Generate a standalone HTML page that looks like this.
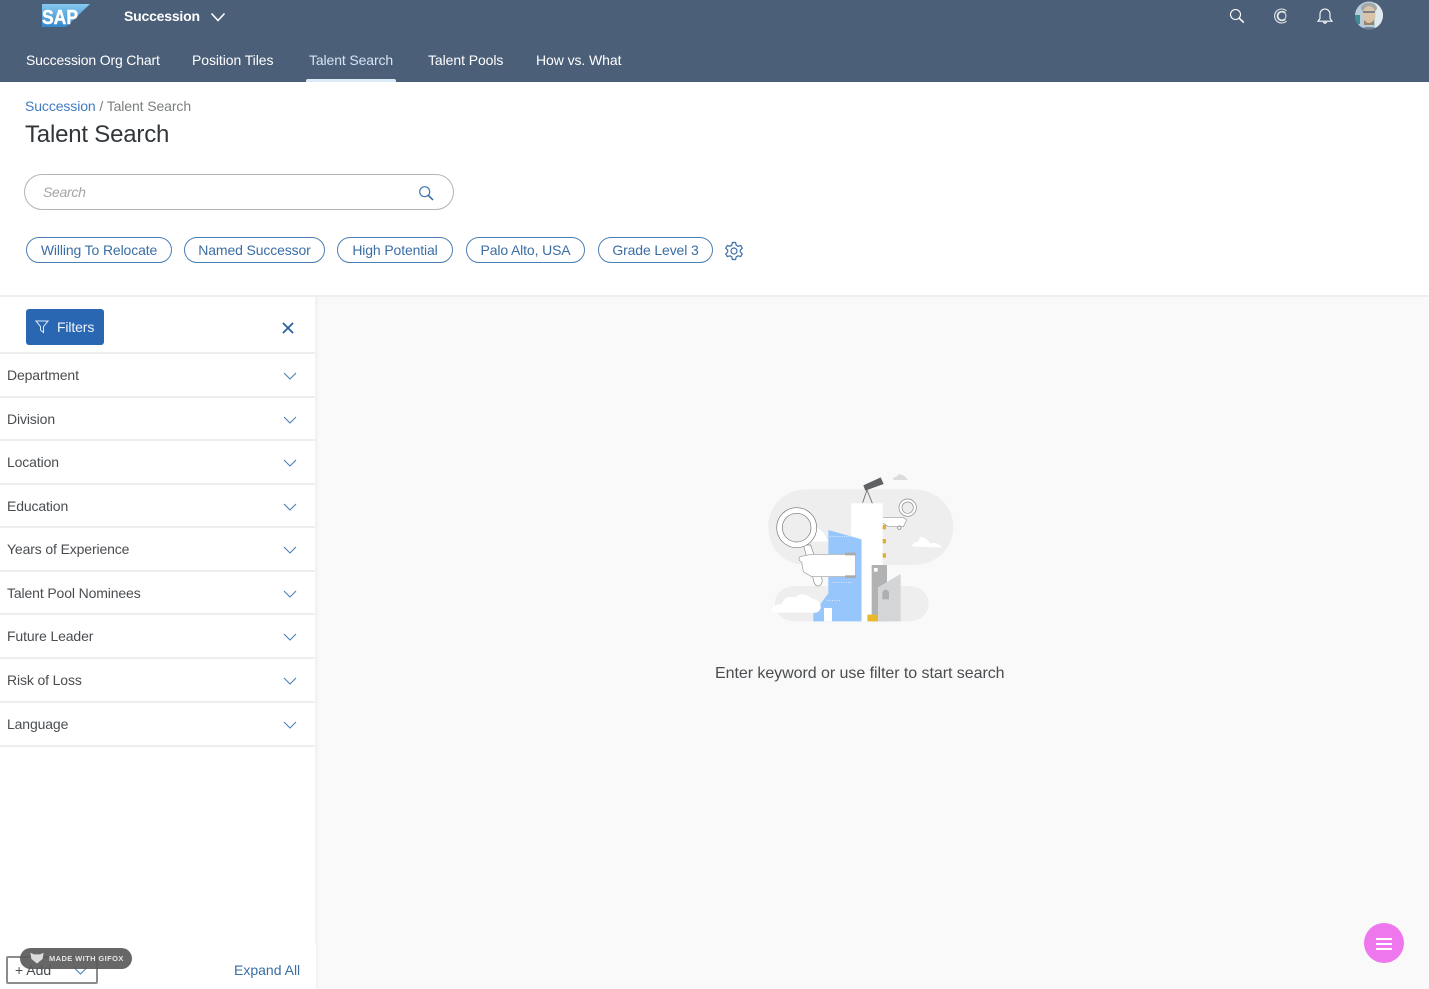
<!DOCTYPE html>
<html><head><meta charset="utf-8"><title>Talent Search</title>
<style>
*{box-sizing:border-box}
html,body{margin:0;padding:0;width:1429px;height:989px;overflow:hidden;background:#fff;font-family:"Liberation Sans",sans-serif;color:#32363a}
.a{position:absolute;white-space:nowrap}
#hdr{position:absolute;left:0;top:0;width:1429px;height:82px;background:#4b5f78}
.nav{position:absolute;top:52px;font-size:14px;line-height:16px;color:#fff;letter-spacing:-.08px}
.chip{position:absolute;top:237px;height:26px;border:1px solid #4a7fb5;border-radius:13px;font-size:14px;line-height:24px;color:#3a6ea5;text-align:center;letter-spacing:-.13px}
.row{position:absolute;left:0;width:315px;height:44px;border-bottom:2px solid #eeeeee;font-size:14px;color:#4a4d50;letter-spacing:-.13px}
.row span{position:absolute;left:7px;top:13px;line-height:16px}
.row svg{position:absolute;left:283px;top:17px}
</style></head><body>
<div id="hdr"></div>

<svg class="a" style="left:42px;top:4px" width="49" height="24" viewBox="0 0 49 24"><defs><linearGradient id="g" x1="0" y1="0" x2="0" y2="1"><stop offset="0" stop-color="#86c8f0"/><stop offset="1" stop-color="#3588cb"/></linearGradient></defs><polygon points="0,0 48,0 24,23 0,23" fill="url(#g)"/><text x="0" y="20" font-family="Liberation Sans" font-weight="700" font-size="20" fill="#fff" stroke="#fff" stroke-width=".5" textLength="36" lengthAdjust="spacingAndGlyphs">SAP</text></svg>
<div class="a" style="left:124px;top:8px;font-size:14px;line-height:16px;font-weight:700;color:#fff;letter-spacing:-.2px">Succession</div>
<svg class="a" style="left:210px;top:11px" width="16" height="12" viewBox="0 0 16 12"><path d="M1.5 2.5 8 9.5 14.5 2.5" fill="none" stroke="#fff" stroke-width="1.6"/></svg>

<div class="nav" style="left:26px;letter-spacing:-.16px">Succession Org Chart</div>
<div class="nav" style="left:192px">Position Tiles</div>
<div class="nav" style="left:309px;color:#d5e4f2;letter-spacing:-.12px">Talent Search</div>
<div class="nav" style="left:428px">Talent Pools</div>
<div class="nav" style="left:536px">How vs. What</div>
<div class="a" style="left:306px;top:79px;width:90px;height:3px;background:#dcebf8;border-radius:2px 2px 0 0"></div>

<svg class="a" style="left:1229px;top:8px" width="16" height="16" viewBox="0 0 16 16"><circle cx="6.5" cy="6.5" r="5" fill="none" stroke="#fff" stroke-width="1.1"/><path d="M10.2 10.2 14.8 14.6" stroke="#fff" stroke-width="1.6"/></svg>
<svg class="a" style="left:1273px;top:8px" width="16" height="16" viewBox="0 0 16 16" fill="none" stroke="#e2e6ea"><path d="M13.5 3A7 7 0 1 0 13.5 13" stroke-width="1.1"/><path d="M12.5 5A4.7 4.7 0 1 0 12.5 11" stroke-width="1.1"/><circle cx="9" cy="8" r="4" stroke-width="1"/></svg>
<svg class="a" style="left:1317px;top:8px" width="16" height="16" viewBox="0 0 16 16" fill="none" stroke="#fff" stroke-width="1.1"><path d="M1 13.2H15L13 10.5V6A5 5 0 0 0 3 6V10.5Z"/><path d="M6.5 14A1.6 1.6 0 0 0 9.500 14" stroke-width="1.3"/></svg>
<svg class="a" style="left:1355px;top:1px" width="28" height="29" viewBox="0 0 28 29"><defs><clipPath id="c"><circle cx="14" cy="14.500" r="14"/></clipPath></defs><g clip-path="url(#c)"><rect width="28" height="29" fill="#b7cbd8"/><rect x="20" width="8" height="29" fill="#dfe9ee"/><rect x="0" y="14" width="5" height="9" fill="#3f8b96"/><ellipse cx="14" cy="7" rx="8" ry="5" fill="#a5a8a8"/><ellipse cx="14" cy="14" rx="6.500" ry="9" fill="#d9c3a9"/><rect x="8" y="10" width="12" height="2" fill="#7c8382"/><path d="M9 19Q14 25 19 19V24H9Z" fill="#9a8468"/><path d="M2 29Q14 23 26 29Z" fill="#6b7e92"/></g></svg>

<div class="a" style="left:25px;top:98px;font-size:14px;line-height:16px;color:#7b7e80;letter-spacing:-.1px"><span style="color:#427cc0">Succession</span> / Talent Search</div>
<div class="a" style="left:25px;top:121px;font-size:24px;line-height:28px;color:#32363a;letter-spacing:-.2px">Talent Search</div>

<div class="a" style="left:24px;top:174px;width:430px;height:36px;border:1px solid #b4b4b4;border-radius:18px"></div>
<div class="a" style="left:43px;top:184px;font-size:14px;line-height:16px;font-style:italic;color:#a3a5a7;letter-spacing:-.3px">Search</div>
<svg class="a" style="left:418px;top:185px" width="16" height="16" viewBox="0 0 16 16"><circle cx="6.700" cy="6.700" r="5" fill="none" stroke="#3f78b5" stroke-width="1.200"/><path d="M10.300 10.300 15 15" stroke="#2f669f" stroke-width="1.500"/></svg>

<div class="chip" style="left:26px;width:146px">Willing To Relocate</div>
<div class="chip" style="left:184px;width:141px">Named Successor</div>
<div class="chip" style="left:337px;width:116px">High Potential</div>
<div class="chip" style="left:466px;width:119px">Palo Alto, USA</div>
<div class="chip" style="left:598px;width:115px">Grade Level 3</div>
<svg class="a" style="left:724px;top:241px" width="20" height="20" viewBox="0 0 20 20" fill="none" stroke="#3a6ea5" stroke-width="1.200"><path d="M8.400 1.500H11.600L12.200 4.200 14.100 5.300 16.700 4.500 18.300 7.200 16.300 9.100V11L18.300 12.900 16.700 15.600 14.100 14.800 12.200 15.900 11.600 18.500H8.400L7.800 15.900 5.900 14.800 3.300 15.600 1.700 12.900 3.700 11V9.100L1.700 7.200 3.300 4.500 5.900 5.300 7.800 4.200Z" stroke-linejoin="round"/><circle cx="10" cy="10" r="3"/></svg>

<div class="a" style="left:0;top:295px;width:1429px;height:2px;background:#efefef"></div>
<div class="a" style="left:316px;top:297px;width:1113px;height:692px;background:#f9f9f9"></div>
<div class="a" style="left:315px;top:297px;width:3px;height:692px;background:#f3f3f3"></div>

<div class="a" style="left:26px;top:309px;width:78px;height:36px;background:#2a67b2;border-radius:3px"></div>
<svg class="a" style="left:35px;top:320px" width="14" height="14" viewBox="0 0 14 14"><path d="M1 1H13L8.500 6.500V12.500L5.500 10V6.500Z" fill="none" stroke="#dce8f5" stroke-width="1"/></svg>
<div class="a" style="left:57px;top:319px;font-size:14px;line-height:16px;color:#eef4fa;letter-spacing:-.13px">Filters</div>
<svg class="a" style="left:282px;top:322px" width="12" height="12" viewBox="0 0 12 12"><path d="M1 1 11 11M11 1 1 11" stroke="#2a5f9e" stroke-width="1.800"/></svg>

<div class="a" style="left:0;top:352px;width:315px;height:2px;background:#eeeeee"></div>
<div class="row" style="top:354px"><span>Department</span><svg width="14" height="10" viewBox="0 0 14 10"><path d="M1 2 7 8 13 2" fill="none" stroke="#4a7fb5" stroke-width="1.100"/></svg></div>
<div class="row" style="top:398px;height:43px"><span>Division</span><svg width="14" height="10" viewBox="0 0 14 10"><path d="M1 2 7 8 13 2" fill="none" stroke="#4a7fb5" stroke-width="1.100"/></svg></div>
<div class="row" style="top:441px"><span>Location</span><svg width="14" height="10" viewBox="0 0 14 10"><path d="M1 2 7 8 13 2" fill="none" stroke="#4a7fb5" stroke-width="1.100"/></svg></div>
<div class="row" style="top:485px;height:43px"><span>Education</span><svg width="14" height="10" viewBox="0 0 14 10"><path d="M1 2 7 8 13 2" fill="none" stroke="#4a7fb5" stroke-width="1.100"/></svg></div>
<div class="row" style="top:528px"><span>Years of Experience</span><svg width="14" height="10" viewBox="0 0 14 10"><path d="M1 2 7 8 13 2" fill="none" stroke="#4a7fb5" stroke-width="1.100"/></svg></div>
<div class="row" style="top:572px;height:43px"><span>Talent Pool Nominees</span><svg width="14" height="10" viewBox="0 0 14 10"><path d="M1 2 7 8 13 2" fill="none" stroke="#4a7fb5" stroke-width="1.100"/></svg></div>
<div class="row" style="top:615px"><span>Future Leader</span><svg width="14" height="10" viewBox="0 0 14 10"><path d="M1 2 7 8 13 2" fill="none" stroke="#4a7fb5" stroke-width="1.100"/></svg></div>
<div class="row" style="top:659px;height:44px"><span>Risk of Loss</span><svg width="14" height="10" viewBox="0 0 14 10"><path d="M1 2 7 8 13 2" fill="none" stroke="#4a7fb5" stroke-width="1.100"/></svg></div>
<div class="row" style="top:703px"><span>Language</span><svg width="14" height="10" viewBox="0 0 14 10"><path d="M1 2 7 8 13 2" fill="none" stroke="#4a7fb5" stroke-width="1.100"/></svg></div>

<svg class="a" style="left:740px;top:460px" width="240" height="180" viewBox="0 0 720 540">
<path d="M200 88H520C590 88 640 140 640 200C640 265 590 315 520 315H200C130 315 85 265 85 200C85 140 130 88 200 88Z" fill="#eeeeee"/>
<path d="M165 378H505C540 378 566 400 566 431C566 462 540 484 505 484H165C130 484 105 462 105 431C105 400 130 378 165 378Z" fill="#eeeeee"/>
<path d="M460 60Q458 50 470 50Q476 38 488 46Q495 46 503 60Z" fill="#dcdcdc"/>
<path d="M515 260Q520 245 535 245Q540 222 555 235Q565 240 570 250Q595 245 605 262Z" fill="#fff"/>
<path d="M170 240Q190 215 215 205Q240 200 255 225L265 245H170Z" fill="#fff"/>
<rect x="333" y="130" width="95" height="354" fill="#fff"/>
<path d="M265 210 365 238V484H220V460L265 400Z" fill="#96c6fb"/>
<path d="M270 230H330M275 368H335M262 422H300" stroke="#fff" stroke-width="2" stroke-dasharray="3 4"/>
<rect x="252" y="444" width="24" height="40" fill="#fff"/>
<rect x="365" y="238" width="17" height="246" fill="#fff"/>
<rect x="395" y="315" width="46" height="169" fill="#b0b2b4"/>
<rect x="402" y="324" width="11" height="11" fill="#fff"/>
<path d="M414 382 482 342V484H414Z" fill="#d4d5d7"/>
<path d="M427 418V396Q437 382 447 396V418Z" fill="#adafb1"/>
<rect x="382" y="464" width="31" height="20" rx="2" fill="#e8b92e"/>
<path d="M428 195h10v13h-10zM428 237h10v13h-10zM428 280h10v13h-10z" fill="#dfb02f"/>
<path d="M430 172H490L500 180 490 200H445L430 190" fill="#fff" stroke="#999" stroke-width="2"/>
<circle cx="478" cy="203" r="5" fill="#fff" stroke="#777" stroke-width="2"/>
<circle cx="503" cy="143" r="26" fill="#fff" stroke="#888" stroke-width="2"/>
<circle cx="503" cy="143" r="17" fill="#eeeeee" stroke="#888" stroke-width="2"/>
<path d="M190 255 212 255 247 360Q245 380 232 378 222 374 220 358Z" fill="#fff" stroke="#888" stroke-width="2"/>
<circle cx="170" cy="203" r="60" fill="#fff" stroke="#777" stroke-width="2"/>
<circle cx="170" cy="203" r="43" fill="#eeeeee" stroke="#777" stroke-width="2"/>
<path d="M347 283H215L180 290Q172 300 185 306L190 335 215 350H347Z" fill="#fff" stroke="#999" stroke-width="2"/>
<rect x="315" y="278" width="32" height="8" fill="#aaa"/>
<rect x="315" y="346" width="32" height="8" fill="#aaa"/>
<path d="M368 128 381 90 397 130" fill="none" stroke="#666" stroke-width="2.500"/>
<path d="M370 76 422 52 431 72 376 92Z" fill="#5f6163"/>
<path d="M95 458Q92 435 125 432Q135 405 165 412Q190 392 215 415Q245 420 242 445 235 462 215 458Z" fill="#fff"/>
</svg>
<div class="a" style="left:715px;top:665px;font-size:16px;line-height:18px;color:#4a4d50;letter-spacing:-.05px">Enter keyword or use filter to start search</div>

<div class="a" style="left:1364px;top:923px;width:40px;height:40px;border-radius:50%;background:#ee77ee"></div>
<div class="a" style="left:1376px;top:938px;width:16px;height:2px;background:#fff"></div>
<div class="a" style="left:1376px;top:943px;width:16px;height:2px;background:#fff"></div>
<div class="a" style="left:1376px;top:948px;width:16px;height:2px;background:#fff"></div>

<div class="a" style="left:0;top:943px;width:316px;height:46px;background:#fff"></div>
<div class="a" style="left:6px;top:956px;width:92px;height:28px;border:2px solid #8a8c8e;border-radius:2px"></div>
<div class="a" style="left:15px;top:962px;font-size:14px;line-height:16px;color:#4a4d50">+ Add</div>
<svg class="a" style="left:73px;top:966px" width="15" height="10" viewBox="0 0 15 10"><path d="M1 1.500 7.500 8 14 1.500" fill="none" stroke="#4a7fb5" stroke-width="1.100"/></svg>
<div class="a" style="left:234px;top:962px;font-size:14px;line-height:16px;color:#3a6ea5">Expand All</div>
<div class="a" style="left:20px;top:948px;width:112px;height:21px;border-radius:11px;background:rgba(90,90,90,.92)"></div>
<svg class="a" style="left:29px;top:951px" width="16" height="14" viewBox="0 0 16 14"><path d="M1 1 5 3H11L15 1 14 8 8 13 2 8Z" fill="#dcdcdc" stroke="#666" stroke-width=".7"/></svg>
<div class="a" style="left:49px;top:954px;font-size:7.500px;line-height:9px;font-weight:700;color:#e6e6e6;letter-spacing:.4px">MADE WITH GIFOX</div>
</body></html>
